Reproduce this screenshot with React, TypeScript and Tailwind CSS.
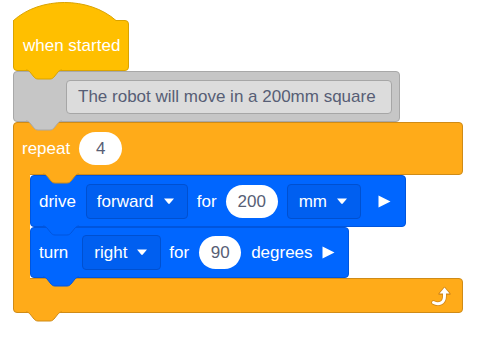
import React from 'react';

const YELLOW = '#ffbf00';
const YELLOW_EDGE = '#d9a300';
const ORANGE = '#ffab19';
const ORANGE_EDGE = '#cf8b17';
const BLUE = '#0066ff';
const BLUE_EDGE = '#0055dd';
const GRAY = '#c6c6c6';
const GRAY_EDGE = '#a8a8a8';

// the tab hanging under a block, sitting in the notch of the next one
function Tab({ fill, stroke, className }: { fill: string; stroke: string; className: string }) {
  return (
    <svg width="36" height="10" viewBox="0 0 36 10" className={`absolute overflow-visible ${className}`}>
      <path
        d="M0,0 C2,0 3,1 4,2 L8,7 C9,8 10,9 12,9 H24 C26,9 27,8 28,7 L32,2 C33,1 34,0 36,0"
        fill={fill}
        stroke={stroke}
        strokeWidth="1"
      />
    </svg>
  );
}

function Caret() {
  return (
    <svg width="12" height="7" viewBox="0 0 12 7" className="ml-[9px]">
      <path d="M1,0.5 H11 L6.8,5.6 Q6,6.5 5.2,5.6 Z" fill="white" />
    </svg>
  );
}

function Play({ className }: { className: string }) {
  return (
    <svg width="13" height="13" viewBox="0 0 13 13" className={className}>
      <path d="M0.5,0.5 L12.5,6.5 L0.5,12.5 Z" fill="white" />
    </svg>
  );
}

function Dropdown({ label, width, pad }: { label: string; width: string; pad: string }) {
  return (
    <div className={`${width} ${pad} h-[35px] flex items-center bg-[#005ff0] border border-[#0050d0] rounded-[4px]`}>
      <span>{label}</span>
      <Caret />
    </div>
  );
}

function Oval({ value, width }: { value: string; width: string }) {
  return (
    <div className={`${width} h-[33px] flex items-center justify-center bg-white rounded-full text-[#575e75]`}>
      {value}
    </div>
  );
}

export default function App() {
  return (
    <div className="min-h-screen bg-white font-['Liberation_Sans',Arial,sans-serif] text-[17px] leading-none text-white">
      <div className="flex flex-col items-start pl-[13px] pt-[2px]">
        {/* when started */}
        <div className="relative z-50 w-[116px]">
          <svg width="116" height="19" viewBox="0 0 116 19" className="relative z-10 block">
            <path d="M0.5,19 V18.5 C27,-5.5 76,-5.5 103,18.5 V19 Z" fill={YELLOW} />
            <path d="M0.5,19 V18.5 C27,-5.5 76,-5.5 103,18.5" fill="none" stroke={YELLOW_EDGE} strokeWidth="1" />
          </svg>
          <div className="-mt-px h-[51px] flex items-center pl-[9px] bg-[#ffbf00] border border-[#d9a300] rounded-tr-[4px] rounded-b-[4px]">
            when started
          </div>
          <Tab fill={YELLOW} stroke={YELLOW_EDGE} className="left-[13px] bottom-[-9px]" />
        </div>

        {/* comment */}
        <div className="relative z-40">
          <div className="w-[387px] h-[51px] flex items-center pl-[52px] bg-[#c6c6c6] border border-[#a8a8a8] rounded-[4px]">
            <div className="w-[326px] h-[34px] flex items-center pl-[11px] bg-[#dcdcdc] border border-[#a6a6a6] rounded-[4px] text-[#575e75]">
              The robot will move in a 200mm square
            </div>
          </div>
          <Tab fill={GRAY} stroke={GRAY_EDGE} className="left-[13px] bottom-[-9px]" />
        </div>

        {/* repeat */}
        <div className="relative z-30 w-[450px] flex flex-col">
          <div className="relative z-20">
            <div className="h-[53px] flex items-center pl-[8px] bg-[#ffab19] border border-[#cf8b17] rounded-t-[4px] rounded-br-[4px]">
              <span>repeat</span>
              <div className="ml-[9px]">
                <Oval value="4" width="w-[43px]" />
              </div>
            </div>
            <Tab fill={ORANGE} stroke={ORANGE_EDGE} className="left-[30px] bottom-[-9px]" />
          </div>

          <div className="flex">
            <div className="relative z-30 w-[17px] -my-px self-stretch bg-[#ffab19] border-l border-[#cf8b17]" />
            <div className="flex flex-col items-start">
              {/* drive */}
              <div className="relative z-[16]">
                <div className="h-[52px] flex items-center pl-[8px] pr-[14px] bg-[#0066ff] border border-[#0055dd] rounded-[4px]">
                  <span>drive</span>
                  <div className="ml-[10px]">
                    <Dropdown label="forward" width="w-[102px]" pad="pl-[10px]" />
                  </div>
                  <span className="ml-[9px]">for</span>
                  <div className="ml-[9px]">
                    <Oval value="200" width="w-[52px]" />
                  </div>
                  <div className="ml-[9px]">
                    <Dropdown label="mm" width="w-[74px]" pad="pl-[11px]" />
                  </div>
                  <Play className="ml-[17px]" />
                </div>
                <Tab fill={BLUE} stroke={BLUE_EDGE} className="left-[13px] bottom-[-9px]" />
              </div>

              {/* turn */}
              <div className="relative z-[14]">
                <div className="h-[51px] flex items-center pl-[8px] pr-[13px] bg-[#0066ff] border border-[#0055dd] rounded-[4px]">
                  <span>turn</span>
                  <div className="ml-[14px]">
                    <Dropdown label="right" width="w-[79px]" pad="pl-[11px]" />
                  </div>
                  <span className="ml-[8px]">for</span>
                  <div className="ml-[10px]">
                    <Oval value="90" width="w-[42px]" />
                  </div>
                  <span className="ml-[10px]">degrees</span>
                  <Play className="ml-[9px]" />
                </div>
                <Tab fill={BLUE} stroke={BLUE_EDGE} className="left-[13px] bottom-[-9px]" />
              </div>
            </div>
          </div>

          <div className="relative z-10">
            <div className="h-[35px] flex items-center justify-end pr-[9px] bg-[#ffab19] border border-[#cf8b17] rounded-b-[4px] rounded-tr-[4px]">
              <svg width="22" height="22" viewBox="0 0 22 22">
                <path d="M2.5,17.5 C7,20 13.5,19 13.5,11 V8" fill="none" stroke="#d0861a" strokeWidth="4.5" strokeLinecap="round" />
                <path d="M8,9 L13.5,2.5 L19,9 Z" fill="#d0861a" stroke="#d0861a" strokeWidth="1.5" strokeLinejoin="round" />
                <path d="M2.5,17.5 C7,20 13.5,19 13.5,11 V8" fill="none" stroke="white" strokeWidth="3" strokeLinecap="round" />
                <path d="M8.5,8.5 L13.5,2.5 L18.5,8.5 Z" fill="white" />
              </svg>
            </div>
            <Tab fill={ORANGE} stroke={ORANGE_EDGE} className="left-[13px] bottom-[-9px]" />
          </div>
        </div>
      </div>
    </div>
  );
}
